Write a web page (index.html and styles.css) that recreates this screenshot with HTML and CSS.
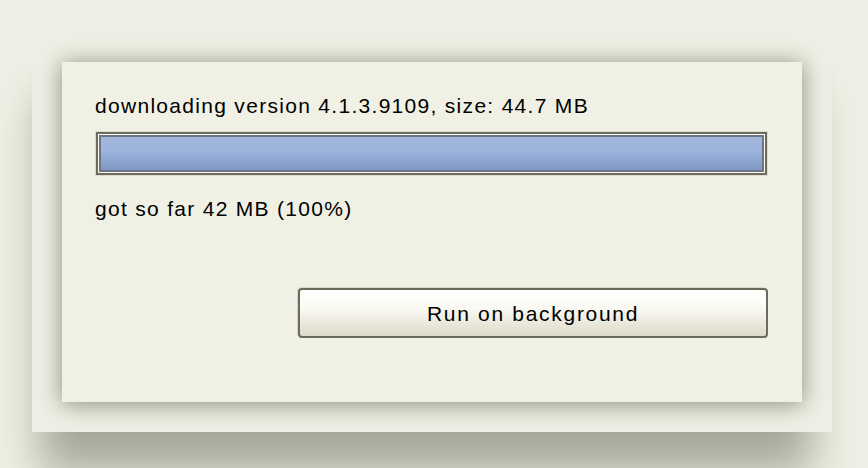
FILE: index.html
```html
<!DOCTYPE html>
<html>
<head>
<meta charset="utf-8">
<link rel="stylesheet" href="styles.css">
</head>
<body>
<div class="stage">
  <div class="card">
    <div class="panel">
      <div class="line title">downloading version 4.1.3.9109, size: 44.7 MB</div>
      <div class="progress">
        <div class="progress-inner">
          <div class="progress-fill" style="width:100%"></div>
        </div>
      </div>
      <div class="line status">got so far 42 MB (100%)</div>
      <div class="actions">
        <button class="btn">Run on background</button>
      </div>
    </div>
  </div>
</div>
</body>
</html>
```
FILE: styles.css
```css
html, body {
  margin: 0;
  padding: 0;
  background: #efefe5;
  width: 868px;
  height: 468px;
  overflow: hidden;
  font-family: "Liberation Sans", Arial, sans-serif;
}
.stage {
  padding: 32px 36px 0 32px;
}
.card {
  width: 800px;
  height: 400px;
  padding: 30px;
  box-sizing: border-box;
  background: #efefe5;
  box-shadow: -6px 54px 40px -14px rgba(70, 70, 50, 0.42);
}
.panel {
  width: 740px;
  height: 340px;
  box-sizing: border-box;
  background: #f0f0e5;
  box-shadow: 0 2px 22px rgba(70, 70, 50, 0.6);
  padding: 32px 34px 0 33px;
  display: flex;
  flex-direction: column;
}
.line {
  font-size: 21px;
  line-height: 24px;
  letter-spacing: 1.3px;
  color: #000;
}
.title {
  height: 24px;
}
.progress {
  margin-top: 13px;
  height: 45px;
  box-sizing: border-box;
  border: 1px solid #dcdccd;
}
.progress-inner {
  height: 100%;
  box-sizing: border-box;
  border: 2px solid #6d6c5c;
  padding: 1px;
  background: #fbfbf6;
}
.progress-fill {
  height: 100%;
  box-sizing: border-box;
  border: 2px solid #6c7585;
  background: linear-gradient(#a2b7dc 0%, #9cb3db 45%, #7f97c4 100%);
}
.status {
  margin-top: 21px;
}
.actions {
  display: flex;
  justify-content: flex-end;
  margin-top: 67px;
}
.btn {
  width: 470px;
  height: 50px;
  box-sizing: border-box;
  border: 2px solid #6b6b5b;
  border-radius: 4px;
  background: linear-gradient(#ffffff 0%, #faf9f3 40%, #dcdac9 100%);
  box-shadow: -1px -1px 0 #d8d8cb;
  font-family: "Liberation Sans", Arial, sans-serif;
  font-size: 21px;
  letter-spacing: 1.7px;
  color: #000;
  padding: 2px 0 0 0;
}
```
